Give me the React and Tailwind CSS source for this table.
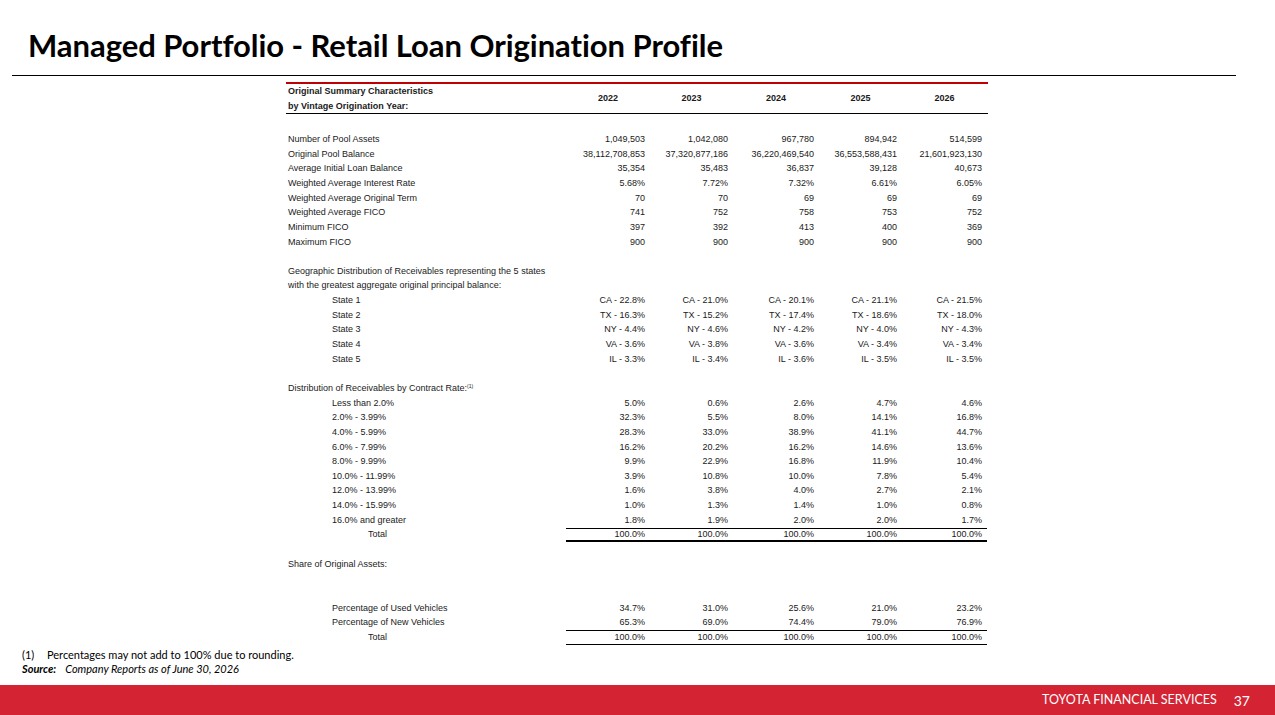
import React from 'react';

// Spaltenbreiten der Jahrgangsspalten (px), Label-Spalte 280px
const years = ['2022', '2023', '2024', '2025', '2026'];
const colW = ['w-[84px]', 'w-[83px]', 'w-[86px]', 'w-[83px]', 'w-[85px]'];

const summary = [
  ['Number of Pool Assets', '1,049,503', '1,042,080', '967,780', '894,942', '514,599'],
  ['Original Pool Balance', '38,112,708,853', '37,320,877,186', '36,220,469,540', '36,553,588,431', '21,601,923,130'],
  ['Average Initial Loan Balance', '35,354', '35,483', '36,837', '39,128', '40,673'],
  ['Weighted Average Interest Rate', '5.68%', '7.72%', '7.32%', '6.61%', '6.05%'],
  ['Weighted Average Original Term', '70', '70', '69', '69', '69'],
  ['Weighted Average FICO', '741', '752', '758', '753', '752'],
  ['Minimum FICO', '397', '392', '413', '400', '369'],
  ['Maximum FICO', '900', '900', '900', '900', '900'],
];

const states = [
  ['State 1', 'CA - 22.8%', 'CA - 21.0%', 'CA - 20.1%', 'CA - 21.1%', 'CA - 21.5%'],
  ['State 2', 'TX - 16.3%', 'TX - 15.2%', 'TX - 17.4%', 'TX - 18.6%', 'TX - 18.0%'],
  ['State 3', 'NY - 4.4%', 'NY - 4.6%', 'NY - 4.2%', 'NY - 4.0%', 'NY - 4.3%'],
  ['State 4', 'VA - 3.6%', 'VA - 3.8%', 'VA - 3.6%', 'VA - 3.4%', 'VA - 3.4%'],
  ['State 5', 'IL - 3.3%', 'IL - 3.4%', 'IL - 3.6%', 'IL - 3.5%', 'IL - 3.5%'],
];

const rates = [
  ['Less than 2.0%', '5.0%', '0.6%', '2.6%', '4.7%', '4.6%'],
  ['2.0% - 3.99%', '32.3%', '5.5%', '8.0%', '14.1%', '16.8%'],
  ['4.0% - 5.99%', '28.3%', '33.0%', '38.9%', '41.1%', '44.7%'],
  ['6.0% - 7.99%', '16.2%', '20.2%', '16.2%', '14.6%', '13.6%'],
  ['8.0% - 9.99%', '9.9%', '22.9%', '16.8%', '11.9%', '10.4%'],
  ['10.0% - 11.99%', '3.9%', '10.8%', '10.0%', '7.8%', '5.4%'],
  ['12.0% - 13.99%', '1.6%', '3.8%', '4.0%', '2.7%', '2.1%'],
  ['14.0% - 15.99%', '1.0%', '1.3%', '1.4%', '1.0%', '0.8%'],
  ['16.0% and greater', '1.8%', '1.9%', '2.0%', '2.0%', '1.7%'],
];

const share = [
  ['Percentage of Used Vehicles', '34.7%', '31.0%', '25.6%', '21.0%', '23.2%'],
  ['Percentage of New Vehicles', '65.3%', '69.0%', '74.4%', '79.0%', '76.9%'],
];

const total = ['100.0%', '100.0%', '100.0%', '100.0%', '100.0%'];

const Row = ({ label, values = [], indent = 'pl-[2px]', cellClass = '' }) => (
  <div className="flex h-[14.65px] items-center">
    <div className={`w-[280px] whitespace-nowrap ${indent}`}>{label}</div>
    {values.map((v, i) => (
      <div key={i} className={`${colW[i]} h-full flex items-center justify-end pr-[5px] whitespace-nowrap ${cellClass}`}>
        {v}
      </div>
    ))}
  </div>
);

const Blank = () => <div className="h-[14.65px]" />;

export default function App() {
  return (
    <div className="w-[1275px] h-[715px] bg-white flex flex-col overflow-hidden">
      {/* Titel */}
      <div className="h-[75px] pl-[28px] pt-[26px]">
        <h1 className="font-['Lato',sans-serif] font-bold text-[31px] leading-[38px] text-black tracking-[-0.05px]">
          Managed Portfolio - Retail Loan Origination Profile
        </h1>
      </div>
      <div className="ml-[12px] w-[1224px] h-px bg-black" />

      {/* Tabelle */}
      <div className="ml-[286px] mt-[6px] w-[702px] font-['Liberation_Sans',Arial,sans-serif] text-[9px] text-[#1a1a1a]">
        <div className="h-[2px] bg-[#c00000]" />
        <div className="flex h-[30px] border-b border-black font-bold">
          <div className="w-[280px] pl-[2px] leading-[15px]">
            <div>Original Summary Characteristics</div>
            <div>by Vintage Origination Year:</div>
          </div>
          {years.map((y, i) => (
            <div key={y} className={`${colW[i]} flex items-center justify-center`}>{y}</div>
          ))}
        </div>
        <div className="h-[18.5px]" />

        {summary.map(([l, ...v]) => <Row key={l} label={l} values={v} />)}
        <Blank />
        <Row label="Geographic Distribution of Receivables representing the 5 states" />
        <Row label="with the greatest aggregate original principal balance:" />
        {states.map(([l, ...v]) => <Row key={l} label={l} values={v} indent="pl-[46px]" />)}
        <Blank />
        <Row
          label={
            <span>
              Distribution of Receivables by Contract Rate:<sup className="text-[5px]">(1)</sup>
            </span>
          }
        />
        {rates.map(([l, ...v]) => <Row key={l} label={l} values={v} indent="pl-[46px]" />)}
        <Row label="Total" values={total} indent="pl-[82px]" cellClass="border-t border-b-2 border-black" />
        <Blank />
        <Row label="Share of Original Assets:" />
        <Blank />
        <Blank />
        {share.map(([l, ...v]) => <Row key={l} label={l} values={v} indent="pl-[46px]" />)}
        <Row label="Total" values={total} indent="pl-[82px]" cellClass="border-t border-b-[1.5px] border-black" />
      </div>

      {/* Fussnoten */}
      <div className="pl-[22px] mt-[3px] font-['Lato',sans-serif] text-[11px] leading-[14px] text-black">
        <div className="flex">
          <span className="w-[25px]">(1)</span>
          <span>Percentages may not add to 100% due to rounding.</span>
        </div>
        <div className="italic">
          <span className="font-bold">Source:</span>
          <span className="ml-[9px]">Company Reports as of June 30, 2026</span>
        </div>
      </div>

      {/* Fusszeile */}
      <div className="mt-auto h-[30px] bg-[#d42333] flex items-center justify-end pr-[25px] font-['Lato',sans-serif] text-white">
        <span className="text-[12.5px]">TOYOTA FINANCIAL SERVICES</span>
        <span className="ml-[17px] text-[14px]">37</span>
      </div>
    </div>
  );
}
